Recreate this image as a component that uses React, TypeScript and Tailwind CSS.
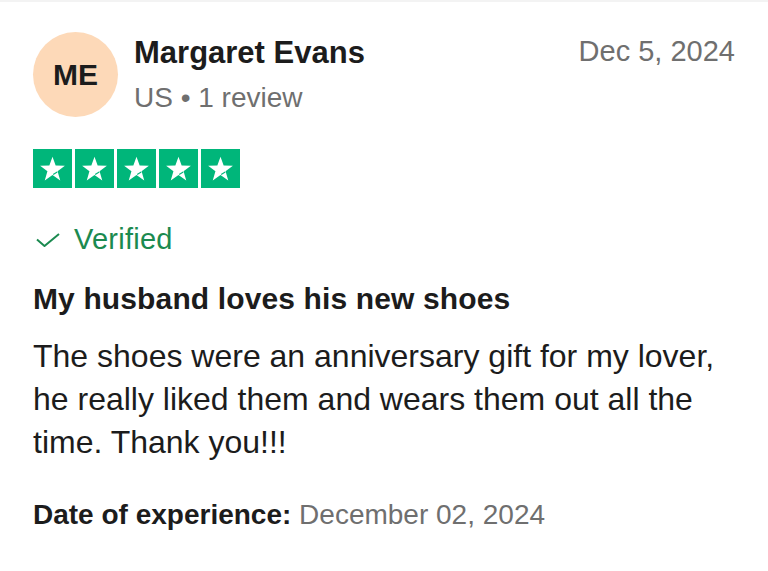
const FONT = "font-['Liberation_Sans',Arial,Helvetica,sans-serif]";

function Star() {
  return (
    <div className="w-[39px] h-[39px] bg-[#00b67a] flex items-center justify-center">
      <svg width="27" height="26" viewBox="0 0 24 23">
        <polygon
          fill="#ffffff"
          points="12,0.5 14.8,8.3 23,8.5 16.5,13.6 18.9,21.8 12,16.9 5.1,21.8 7.5,13.6 1,8.5 9.2,8.3"
        />
        <path d="M12.6 16.4 L16.2 14.2" stroke="#00b67a" strokeWidth="0.9" />
      </svg>
    </div>
  );
}

export default function App() {
  return (
    <div className={`w-[768px] h-[571px] bg-white border-t-2 border-[#f3f3f3] px-[33px] pt-[30px] ${FONT}`}>
      <div className="flex items-start">
        <div className="w-[85px] h-[85px] rounded-full bg-[#fdd9b8] flex items-center justify-center text-[30px] font-bold text-[#1c1c1c] leading-none shrink-0">
          ME
        </div>
        <div className="ml-4 mt-[5px] flex-1">
          <div className="text-[31px] font-bold text-[#1c1c1c] leading-none">Margaret Evans</div>
          <div className="text-[28px] text-[#6f6f6f] leading-none mt-[16px]">US • 1 review</div>
        </div>
        <div className="text-[29px] text-[#6f6f6f] leading-none mt-[5px]">Dec 5, 2024</div>
      </div>

      <div className="flex gap-[3px] mt-[32px]">
        <Star />
        <Star />
        <Star />
        <Star />
        <Star />
      </div>

      <div className="flex items-center mt-[37px] h-[29px]">
        <svg width="24" height="14" viewBox="0 0 24 14" className="ml-[3px]">
          <path d="M1 6.5 L8.5 13 L23 1" fill="none" stroke="#1b8a50" strokeWidth="2" />
        </svg>
        <span className="ml-[14px] text-[29px] text-[#1b8a50] leading-none tracking-[0.25px]">Verified</span>
      </div>

      <h2 className="mt-[30px] text-[30px] font-bold text-[#1c1c1c] leading-none tracking-[0.13px]">
        My husband loves his new shoes
      </h2>

      <p className="mt-[21px] text-[32px] leading-[43px] text-[#1c1c1c]">
        The shoes were an anniversary gift for my lover, he really liked them and wears them out all the time. Thank you!!!
      </p>

      <div className="mt-[37px] text-[28px] leading-none">
        <span className="font-bold text-[#1c1c1c]">Date of experience:</span>{" "}
        <span className="text-[#6f6f6f]">December 02, 2024</span>
      </div>
    </div>
  );
}
